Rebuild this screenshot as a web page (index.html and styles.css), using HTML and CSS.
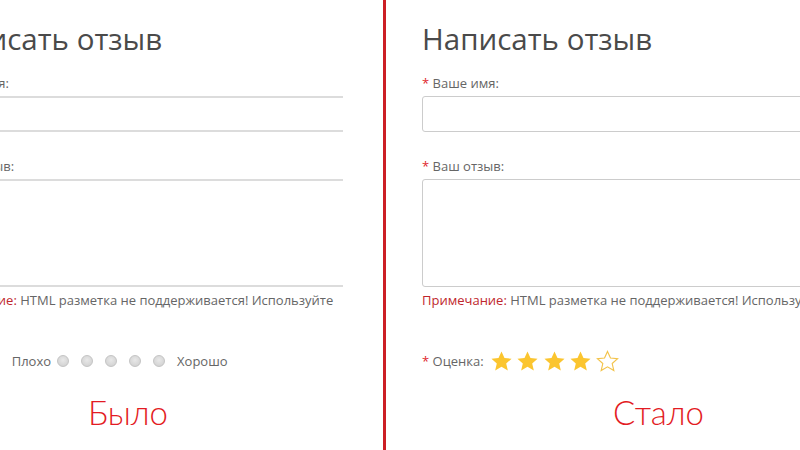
FILE: index.html
```html
<!DOCTYPE html>
<html lang="ru">
<head>
    <meta charset="UTF-8">
    <title>Отзывы: было и стало</title>
    <link rel="stylesheet" href="styles.css">
</head>
<body>
    <div class="compare">
        <div class="panel panel-old">
            <form class="review-form old">
                <h1>Написать отзыв</h1>
                <label class="field-label"><span class="req">*</span> Ваше имя:</label>
                <input type="text" class="field">
                <label class="field-label field-label-2"><span class="req">*</span> Ваш отзыв:</label>
                <textarea class="field area"></textarea>
                <p class="note"><span class="note-title">Примечание:</span> HTML разметка не поддерживается! Используйте</p>
                <div class="rating">
                    <span class="field-label"><span class="req">*</span> Оценка:</span>
                    <span class="scale">Плохо</span>
                    <span class="radio"></span>
                    <span class="radio"></span>
                    <span class="radio"></span>
                    <span class="radio"></span>
                    <span class="radio"></span>
                    <span class="scale scale-end">Хорошо</span>
                </div>
            </form>
            <div class="caption caption-old">Было</div>
        </div>
        <div class="divider"></div>
        <div class="panel panel-new">
            <form class="review-form">
                <h1>Написать отзыв</h1>
                <label class="field-label"><span class="req">*</span> Ваше имя:</label>
                <input type="text" class="field">
                <label class="field-label field-label-2"><span class="req">*</span> Ваш отзыв:</label>
                <textarea class="field area"></textarea>
                <p class="note"><span class="note-title">Примечание:</span> HTML разметка не поддерживается! Используйте</p>
                <div class="rating">
                    <span class="field-label"><span class="req">*</span> Оценка:</span>
                    <span class="stars">
                        <svg class="star" viewBox="0 0 24 24"><path d="M12 1.5l3.1 6.9 7.4.7-5.6 5 1.7 7.4L12 17.6l-6.6 3.9 1.7-7.4-5.6-5 7.4-.7z"/></svg>
                        <svg class="star" viewBox="0 0 24 24"><path d="M12 1.5l3.1 6.9 7.4.7-5.6 5 1.7 7.4L12 17.6l-6.6 3.9 1.7-7.4-5.6-5 7.4-.7z"/></svg>
                        <svg class="star" viewBox="0 0 24 24"><path d="M12 1.5l3.1 6.9 7.4.7-5.6 5 1.7 7.4L12 17.6l-6.6 3.9 1.7-7.4-5.6-5 7.4-.7z"/></svg>
                        <svg class="star" viewBox="0 0 24 24"><path d="M12 1.5l3.1 6.9 7.4.7-5.6 5 1.7 7.4L12 17.6l-6.6 3.9 1.7-7.4-5.6-5 7.4-.7z"/></svg>
                        <svg class="star empty" viewBox="0 0 24 24"><path d="M12 1.5l3.1 6.9 7.4.7-5.6 5 1.7 7.4L12 17.6l-6.6 3.9 1.7-7.4-5.6-5 7.4-.7z"/></svg>
                    </span>
                </div>
            </form>
            <div class="caption caption-new">Стало</div>
        </div>
    </div>
</body>
</html>
```

FILE: styles.css
```css
body {
    margin: 0;
    background: #fff;
    font-family: "Open Sans", Arial, sans-serif;
    color: #666;
}
.compare {
    display: flex;
    height: 450px;
    overflow: hidden;
}
.panel {
    overflow: hidden;
    white-space: nowrap;
}
.panel-old {
    width: 383px;
}
.panel-new {
    flex: 1;
}
.divider {
    width: 3px;
    background: #cc1f25;
    flex-shrink: 0;
}
.review-form {
    width: 411px;
    padding-top: 22px;
    margin-left: 36px;
}
.review-form.old {
    margin-left: -68px;
}
h1 {
    margin: 0 0 19px;
    font-size: 29.5px;
    line-height: 34px;
    font-weight: 400;
    color: #4a4a4a;
}
.field-label {
    display: block;
    font-size: 13px;
    line-height: 16px;
    color: #666;
    margin-bottom: 5px;
}
.field-label-2 {
    margin-top: 26px;
}
.req {
    color: #e0262c;
}
.field {
    display: block;
    box-sizing: border-box;
    width: 100%;
    height: 36px;
    margin: 0;
    border: 1px solid #ccc;
    border-radius: 3px;
    background: #fff;
    font: inherit;
    resize: none;
}
.area {
    height: 108px;
}
.old .field {
    border-radius: 0;
    border-color: #dcdcdc;
    border-width: 2px 0 2px 0;
}
.note {
    margin: 4px 0 0;
    font-size: 13px;
    line-height: 18px;
    color: #666;
}
.note-title {
    color: #c0272d;
}
.rating {
    display: flex;
    align-items: center;
    margin-top: 41px;
    height: 22px;
}
.rating .field-label {
    display: inline;
    margin: 0 6px 0 0;
}
.old .rating .field-label {
    margin-right: 18px;
}
.scale {
    font-size: 13px;
    color: #666;
    margin-right: 6px;
}
.radio {
    box-sizing: border-box;
    width: 12px;
    height: 12px;
    border-radius: 50%;
    border: 1px solid #c4c4c4;
    background: radial-gradient(circle at 50% 40%, #e8e8e8, #cdcdcd);
    margin-right: 12px;
}
.radio:last-of-type {
    margin-right: 6px;
}
.scale-end {
    margin-right: 0;
}
.stars {
    display: flex;
    gap: 3.5px;
}
.star {
    width: 23px;
    height: 23px;
    fill: #fbc52f;
}
.star.empty {
    fill: none;
    stroke: #f3c34a;
    stroke-width: 1.2;
}
.caption {
    font-family: Lato, "Open Sans", sans-serif;
    font-weight: 300;
    font-size: 33px;
    line-height: 40px;
    color: #e31b23;
    margin-top: 20px;
}
.caption-old {
    margin-left: 88px;
}
.caption-new {
    margin-left: 227px;
}
```
